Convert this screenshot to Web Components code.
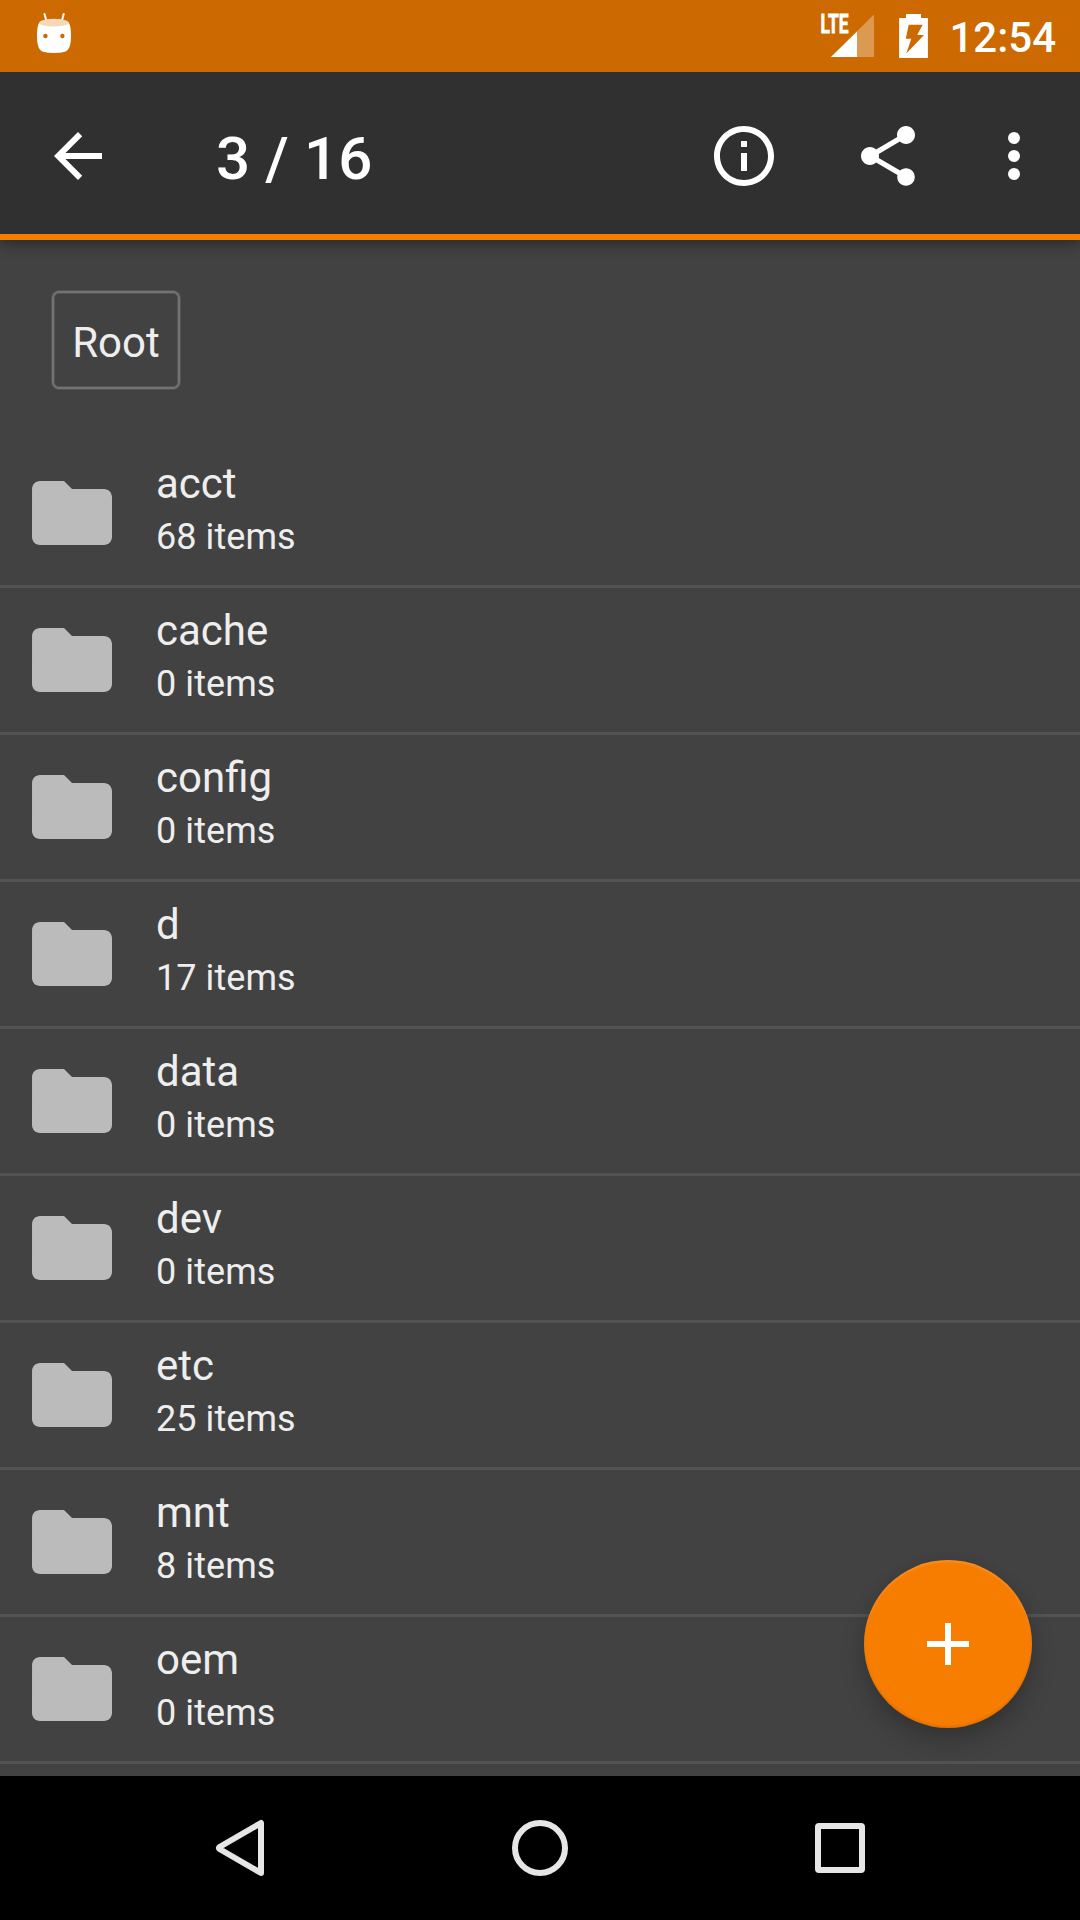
<!DOCTYPE html>
<html lang="en">
<head>
<meta charset="utf-8">
<title>Files</title>
<style>
html, body { margin: 0; padding: 0; background: #424242; overflow: hidden; }
body { font-family: Roboto, "Noto Sans", sans-serif; }
</style>
</head>
<body>
<file-app></file-app>
<script>
function define(name, html, setup) {
  const t = document.createElement('template');
  t.innerHTML = html;
  customElements.define(name, class extends HTMLElement {
    constructor() {
      super();
      this.attachShadow({ mode: 'open' }).appendChild(t.content.cloneNode(true));
    }
    connectedCallback() { if (setup) setup(this, this.shadowRoot); }
  });
}

const ICONS = {
  back: '<path d="M20 11H7.83l5.59-5.59L12 4l-8 8 8 8 1.41-1.41L7.83 13H20v-2z"/>',
  info: '<path d="M11 17h2v-6h-2v6zm1-15C6.48 2 2 6.48 2 12s4.48 10 10 10 10-4.48 10-10S17.520 2 12 2zm0 18c-4.410 0-8-3.590-8-8s3.590-8 8-8 8 3.590 8 8-3.590 8-8 8zM11 9h2V7h-2v2z"/>',
  share: '<path d="M18 16.080c-.760 0-1.440.300-1.960.770L8.910 12.700c.050-.230.090-.460.090-.700s-.040-.470-.090-.700l7.050-4.110c.540.500 1.250.810 2.040.810 1.660 0 3-1.340 3-3s-1.340-3-3-3-3 1.340-3 3c0 .240.040.470.090.700L8.040 9.810C7.500 9.310 6.790 9 6 9c-1.660 0-3 1.340-3 3s1.340 3 3 3c.790 0 1.500-.310 2.040-.810l7.120 4.160c-.050.210-.080.430-.080.650 0 1.610 1.310 2.920 2.920 2.920 1.610 0 2.920-1.310 2.920-2.920s-1.310-2.920-2.920-2.920z"/>',
  more: '<circle cx="12" cy="6" r="2"/><circle cx="12" cy="12" r="2"/><circle cx="12" cy="18" r="2"/>',
  folder: '<path d="M10 4H4c-1.100 0-1.990.900-1.990 2L2 18c0 1.100.900 2 2 2h16c1.100 0 2-.900 2-2V8c0-1.100-.900-2-2-2h-8l-2-2z"/>',
  add: '<path d="M19 13h-6v6h-2v-6H5v-2h6V5h2v6h6v2z"/>'
};

define('ui-icon', `
<style>
:host { display: block; flex: none; width: 72px; height: 72px; }
svg { display: block; width: 100%; height: 100%; fill: currentColor; }
</style><svg viewBox="0 0 24 24"></svg>`,
(el, root) => { root.querySelector('svg').innerHTML = ICONS[el.getAttribute('name')]; });

define('status-bar', `
<style>
:host { display: flex; align-items: center; height: 72px; background: #cc6900; color: #fff; box-sizing: border-box; padding: 0 24px 0 36px; position: relative; z-index: 2; }
svg { display: block; flex: none; }
.signal { margin-left: auto; }
.battery { margin-left: 23px; }
.lte { font: 700 26px Roboto, sans-serif; }
.time { width: 125px; text-align: right; font-size: 42px; font-weight: 500; line-height: 50px; padding-top: 4px; }
</style>
<svg width="36" height="72" viewBox="0 0 36 72">
  <path d="M8.500 14l2 7.500M27.700 14l-2 7.500" stroke="#fff" stroke-width="2" stroke-linecap="round"/>
  <path d="M3.500 22.500C1.500 25 1 30 1 36c0 6 .700 11 3.300 14 2 2.200 8 3 13.700 3s11.700-.800 13.700-3C34.300 47 35 42 35 36c0-6-.500-11-2.500-13.500z" fill="#fff"/>
  <ellipse cx="18" cy="22.700" rx="14.700" ry="3.900" fill="#f4d8ba"/>
  <circle cx="9.400" cy="36" r="2.200" fill="#cc6900"/><circle cx="26.400" cy="36" r="2.200" fill="#cc6900"/>
</svg>
<svg class="signal" width="56" height="72" viewBox="0 0 56 72" fill="#fff">
  <path d="M55 14.500V57H12z" opacity=".32"/>
  <path d="M38 31.500V57H12z"/>
  <text class="lte" transform="translate(1.500 33.400)" textLength="28" lengthAdjust="spacingAndGlyphs" stroke="#fff" stroke-width=".8">LTE</text>
</svg>
<svg class="battery" width="33" height="72" viewBox="0 0 33 72">
  <path d="M8 14h15v4h6.900v40H1.100V18H8z" fill="#fff"/>
  <path d="M10.700 24.800h14L19.200 35H26L8.300 53.500l5-14.700H7.800z" fill="#cc6900"/>
</svg>
<span class="time"><slot></slot></span>`);

define('action-toolbar', `
<style>
:host { display: flex; align-items: center; height: 168px; box-sizing: border-box; padding: 6px 30px 0 42px; background: #303030; color: #fff; border-bottom: 6px solid #f77d00; box-shadow: 0 4px 12px rgba(0,0,0,.38); position: relative; z-index: 1; }
h1 { margin: 0 auto 0 102px; font-size: 60px; font-weight: 500; line-height: 71px; padding-top: 5px; letter-spacing: .15px; }
.actions { display: flex; }
.share { margin-left: 72px; }
.more { margin-left: 54px; }
</style>
<ui-icon name="back"></ui-icon>
<h1><slot></slot></h1>
<div class="actions">
  <ui-icon name="info"></ui-icon><ui-icon class="share" name="share"></ui-icon><ui-icon class="more" name="more"></ui-icon>
</div>`);

define('path-crumb', `
<style>
:host { display: flex; padding: 51px 52px 0; height: 150px; color: #eee; }
button { all: unset; box-sizing: border-box; height: 98px; width: 128px; border: 2px solid #747474; border-radius: 7px; box-shadow: 0 0 0 1px #535353, inset 0 0 0 1px #535353; font-size: 42px; line-height: 100px; text-align: center; }
</style><button><slot></slot></button>`);

define('folder-row', `
<style>
:host { display: flex; height: 147px; box-sizing: border-box; border-bottom: 3px solid #535353; padding-left: 24px; color: #eee; }
ui-icon { width: 96px; height: 96px; margin-top: 24px; color: #bbb; }
.text { margin-left: 36px; padding-top: 18px; }
.name { font-size: 42px; line-height: 50px; height: 57px; }
.count { font-size: 36px; line-height: 43px; letter-spacing: .07px; }
</style>
<ui-icon name="folder"></ui-icon>
<div class="text"><div class="name"><slot></slot></div><div class="count"><slot name="count"></slot></div></div>`);

define('add-button', `
<style>
:host { position: absolute; right: 48px; bottom: 48px; display: flex; align-items: center; justify-content: center; width: 168px; height: 168px; border-radius: 50%; background: #f77d00; color: #fff; box-shadow: inset 0 2px 2px rgba(255,255,255,.14), inset 0 -2px 3px rgba(0,0,0,.1), 0 14px 24px rgba(0,0,0,.2), 0 0 12px rgba(0,0,0,.06); }
</style><ui-icon name="add"></ui-icon>`);

define('nav-bar', `
<style>
:host { display: flex; justify-content: center; gap: 228px; height: 144px; background: #000; }
svg { display: block; width: 72px; height: 144px; fill: none; stroke: #e6e6e6; stroke-width: 6; stroke-linejoin: round; }
</style>
<svg viewBox="0 0 72 144"><path d="M57 47v50L15.500 73Q14.500 72 15.500 71z"/></svg>
<svg viewBox="0 0 72 144"><circle cx="36" cy="72" r="25"/></svg>
<svg viewBox="0 0 72 144"><rect x="14" y="50" width="44" height="44" rx="1"/></svg>`);

define('file-app', `
<style>
:host { display: flex; flex-direction: column; width: 1080px; height: 1920px; background: #424242; overflow: hidden; }
main { flex: 1; min-height: 0; overflow: hidden; position: relative; }
</style>
<status-bar>12:54</status-bar>
<action-toolbar>3 / 16</action-toolbar>
<main>
  <path-crumb>Root</path-crumb>
  <folder-row>acct<span slot="count">68 items</span></folder-row>
  <folder-row>cache<span slot="count">0 items</span></folder-row>
  <folder-row>config<span slot="count">0 items</span></folder-row>
  <folder-row>d<span slot="count">17 items</span></folder-row>
  <folder-row>data<span slot="count">0 items</span></folder-row>
  <folder-row>dev<span slot="count">0 items</span></folder-row>
  <folder-row>etc<span slot="count">25 items</span></folder-row>
  <folder-row>mnt<span slot="count">8 items</span></folder-row>
  <folder-row>oem<span slot="count">0 items</span></folder-row>
  <add-button></add-button>
</main>
<nav-bar></nav-bar>`);
</script>
</body>
</html>
